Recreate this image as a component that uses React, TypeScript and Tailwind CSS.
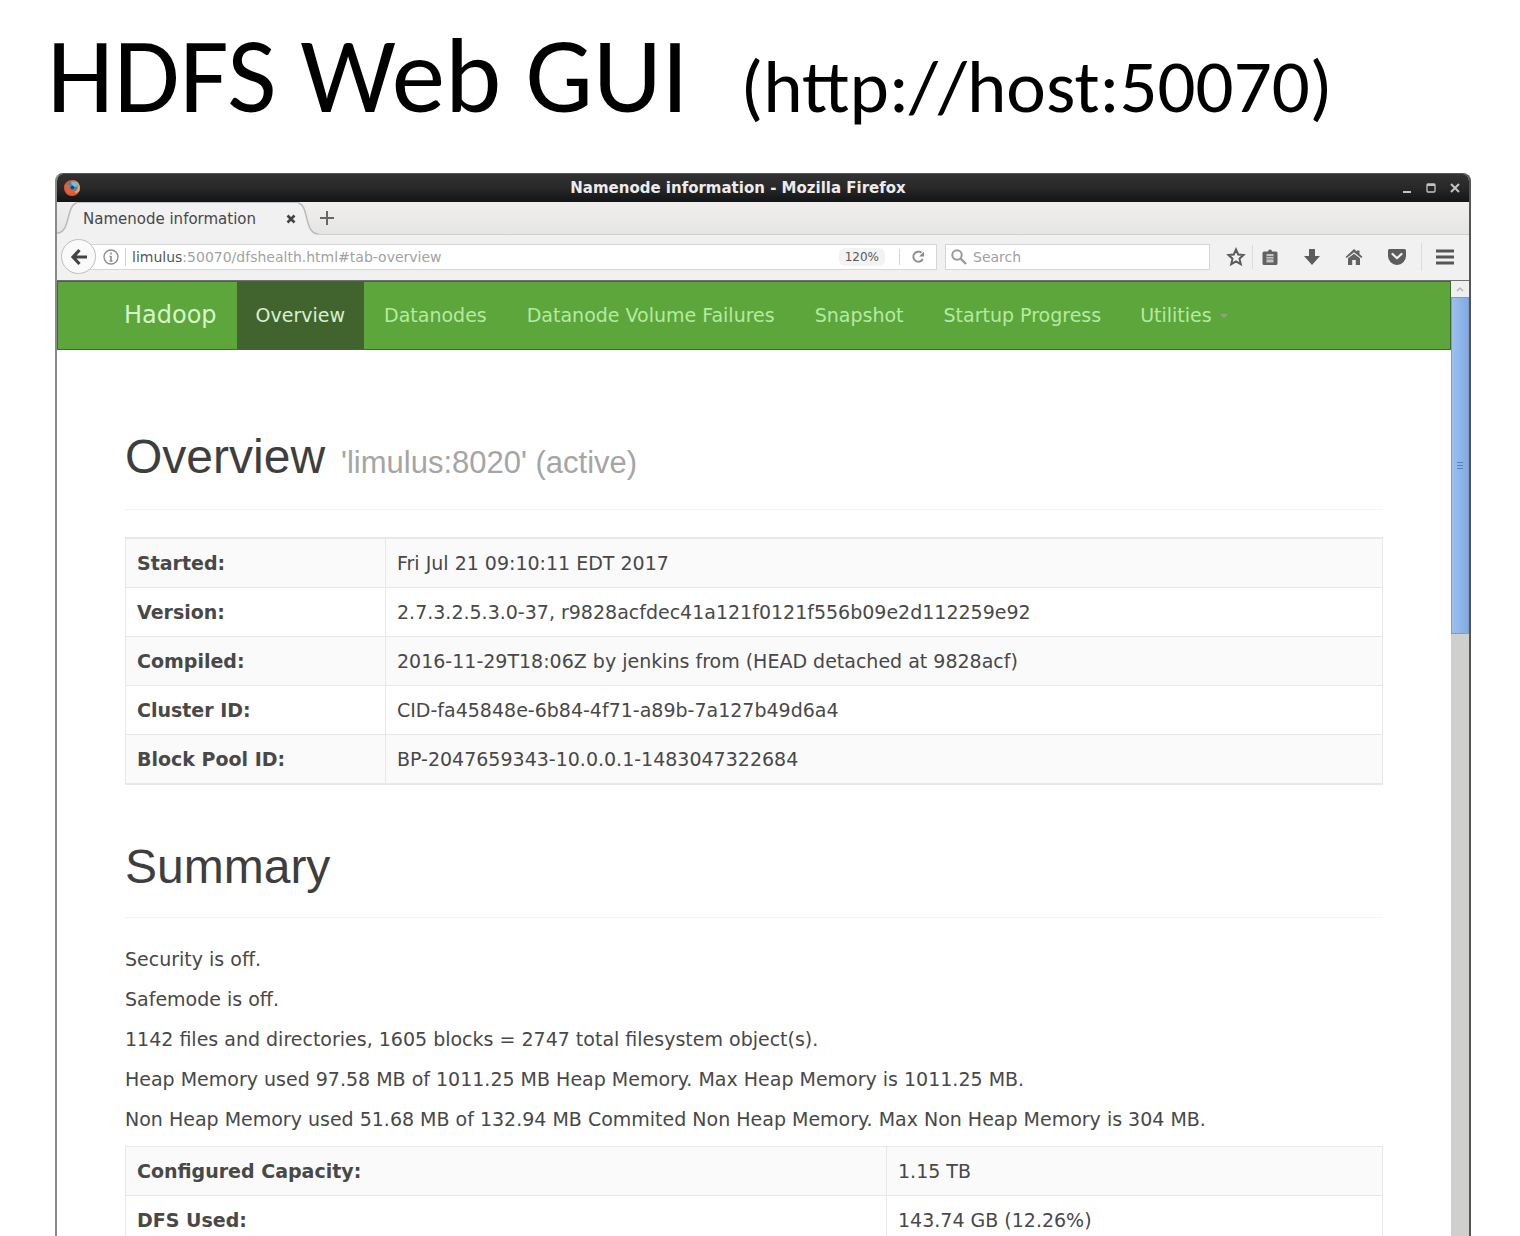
import React from "react";

const navItems = ["Datanodes", "Datanode Volume Failures", "Snapshot", "Startup Progress"];

const overviewRows = [
  ["Started:", "Fri Jul 21 09:10:11 EDT 2017"],
  ["Version:", "2.7.3.2.5.3.0-37, r9828acfdec41a121f0121f556b09e2d112259e92"],
  ["Compiled:", "2016-11-29T18:06Z by jenkins from (HEAD detached at 9828acf)"],
  ["Cluster ID:", "CID-fa45848e-6b84-4f71-a89b-7a127b49d6a4"],
  ["Block Pool ID:", "BP-2047659343-10.0.0.1-1483047322684"],
];

const summaryLines = [
  "Security is off.",
  "Safemode is off.",
  "1142 files and directories, 1605 blocks = 2747 total filesystem object(s).",
  "Heap Memory used 97.58 MB of 1011.25 MB Heap Memory. Max Heap Memory is 1011.25 MB.",
  "Non Heap Memory used 51.68 MB of 132.94 MB Commited Non Heap Memory. Max Non Heap Memory is 304 MB.",
];

const summaryRows = [
  ["Configured Capacity:", "1.15 TB"],
  ["DFS Used:", "143.74 GB (12.26%)"],
];

function FirefoxLogo() {
  return (
    <svg viewBox="0 0 18 18" className="size-[18px]" aria-hidden="true">
      <circle cx="9" cy="9" r="8" fill="#dc5a34" />
      <path d="M9 1a8 8 0 0 1 7.4 11C14 15 11 14 11 12l3-5-2-5z" fill="#e0a468" />
      <circle cx="9.5" cy="7.8" r="5.2" fill="#3f86b4" />
      <path d="M8 2.8c3-1 6.500 1 6.700 4.500L11 8 8.500 5z" fill="#6fc0dc" />
      <path d="M1.300 6C3 5 6 5.500 7.500 7c-1 .6-1.500 1.500-.8 2.700.8 1.300 3 1.600 5.300.8-1 3-5 4.500-8 2.500z" fill="#e8603a" />
      <circle cx="9.500" cy="8.500" r="1.800" fill="#2c3f52" />
    </svg>
  );
}

function TitleBar() {
  return (
    <div className="grid h-7 grid-cols-[100px_1fr_100px] items-center bg-gradient-to-b from-[#323232] via-[#282828] to-[#121416] pl-1.5 pr-2">
      <FirefoxLogo />
      <div className="pr-12 text-center text-[15px] font-bold leading-5 text-[#ececec]">Namenode information - Mozilla Firefox</div>
      <div className="flex items-center justify-end gap-3 text-[#c4c4c4]">
        <button aria-label="Minimize">
          <svg viewBox="0 0 12 12" className="size-3"><path d="M2 10h8" stroke="currentColor" strokeWidth="2" /></svg>
        </button>
        <button aria-label="Maximize">
          <svg viewBox="0 0 12 12" className="size-3" fill="none" stroke="currentColor"><rect x="2" y="2" width="8" height="8" rx="1" strokeWidth="1.300" /><path d="M2 3h8" strokeWidth="2" /></svg>
        </button>
        <button aria-label="Close window">
          <svg viewBox="0 0 12 12" className="size-3"><path d="M2 2l8 8M10 2l-8 8" stroke="currentColor" strokeWidth="2" /></svg>
        </button>
      </div>
    </div>
  );
}

function TabStrip() {
  return (
    <div className="flex h-[33px] bg-gradient-to-b from-[#f0efed] to-[#e5e5e3] text-[#484848]">
      <svg viewBox="0 0 20 33" className="h-[33px] w-5 shrink-0" aria-hidden="true">
        <path d="M0 32C14 32 9 2 20 1V33H0z" fill="#f1f1f1" />
        <path d="M0 31C14 31 9 2 20 1" fill="none" stroke="#b9b9b9" strokeWidth="1.500" />
      </svg>
      <div className="flex items-center gap-[30px] border-t border-[#c4c4c4] bg-[#f1f1f1] pl-1.5 pr-0.5">
        <span className="text-[15px] leading-5">Namenode information</span>
        <button aria-label="Close tab">
          <svg viewBox="0 0 10 10" className="size-2.5"><path d="M1.500 1.500l7 7M8.500 1.500l-7 7" stroke="#444" strokeWidth="2.600" /></svg>
        </button>
      </div>
      <svg viewBox="0 0 20 33" className="h-[33px] w-5 shrink-0" aria-hidden="true">
        <path d="M0 1C11 2 6 32 20 32V33H0z" fill="#f1f1f1" />
        <path d="M0 1C11 2 6 32 20 32" fill="none" stroke="#b9b9b9" strokeWidth="1.500" />
      </svg>
      <div className="flex flex-1 items-center border-b border-[#cfcfcd] pl-0.5">
        <button aria-label="New tab">
          <svg viewBox="0 0 14 14" className="size-3.5"><path d="M7 0v14M0 7h14" stroke="#666" strokeWidth="2" /></svg>
        </button>
      </div>
    </div>
  );
}

function Toolbar() {
  return (
    <div className="flex h-[46px] items-center border-b border-[#707070] bg-[#f1f1f1] pb-0.5 pl-1 pr-[15px] text-[14px] text-[#595959]">
      <button aria-label="Back" className="z-10 flex size-[35px] shrink-0 items-center justify-center rounded-full border border-[#bdbdbd] bg-[#fafafa]">
        <svg viewBox="0 0 18 18" className="size-[18px]" fill="none" stroke="#444" strokeWidth="3.200"><path d="M9.500 2L3 9l6.500 7M3.500 9H17" /></svg>
      </button>
      <div className="-ml-2 mr-2 flex h-[26px] flex-1 items-center border border-[#d6d6d6] bg-white pl-3.5">
        <svg viewBox="0 0 16 16" className="size-4 shrink-0" fill="none" stroke="#8c8c8c"><circle cx="8" cy="8" r="7" strokeWidth="1.300" /><path d="M8 7v5M6.500 7.500H8M6.500 12h3M8 3.500v2" strokeWidth="1.600" /></svg>
        <label htmlFor="address" className="ml-1.5 border-l border-[#d0d0d0] pl-1.5 leading-[18px] text-[#555]">limulus</label>
        <input id="address" className="h-[18px] min-w-0 flex-1 bg-transparent leading-[18px] text-[#a2a2a2] outline-none" defaultValue=":50070/dfshealth.html#tab-overview" />
        <button className="rounded-md bg-[#f3f3f3] px-1.5 text-[12px] leading-[18px]">120%</button>
        <button aria-label="Reload" className="ml-3.5 border-l border-[#d6d6d6] px-2.5">
          <svg viewBox="0 0 16 16" className="size-4" fill="none" stroke="#8a8a8a" strokeWidth="1.800"><path d="M11.500 3.800A5 5 0 1 0 12.800 10" /><path d="M9 7.500H14V2.500z" fill="#8a8a8a" stroke="none" /></svg>
        </button>
      </div>
      <div className="mr-4 flex h-[26px] w-[265px] items-center gap-1.5 border border-[#d6d6d6] bg-white pl-[5px]">
        <svg viewBox="0 0 16 16" className="size-4 shrink-0" fill="none" stroke="#999"><circle cx="6" cy="6" r="4.700" strokeWidth="2" /><path d="M9.500 9.500L15 15" strokeWidth="2.400" /></svg>
        <input aria-label="Search" placeholder="Search" className="h-[18px] min-w-0 flex-1 bg-transparent leading-[18px] outline-none placeholder:text-[#a0a0a0]" />
      </div>
      <div className="flex items-center">
        <button aria-label="Bookmark this page">
          <svg viewBox="0 0 20 20" className="size-5" fill="none" stroke="#5c5c5c" strokeWidth="2"><path d="M10 2.500l2.200 5 5.300.5-4 3.700 1.300 5.500L10 14.300l-4.800 2.900 1.300-5.500-4-3.700 5.300-.5z" /></svg>
        </button>
        <span className="ml-1.5 h-6 border-l border-[#dcdcdc]" />
        <button aria-label="Bookmarks" className="ml-2">
          <svg viewBox="0 0 18 18" className="size-[18px]"><path d="M3 3.500h4A2 2 0 0 1 11 3.500h4a1.500 1.500 0 0 1 1.500 1.500v10.500a1.500 1.500 0 0 1-1.500 1.500H3a1.500 1.500 0 0 1-1.500-1.500V5A1.500 1.500 0 0 1 3 3.500z" fill="#626262" /><path d="M5.500 6h7v8.500h-7z" fill="#c4c4c4" /><path d="M5.500 8.500h7M5.500 11h7" stroke="#727272" strokeWidth="1.200" /></svg>
        </button>
        <button aria-label="Downloads" className="ml-6">
          <svg viewBox="0 0 18 18" className="size-[18px]" fill="#5c5c5c"><path d="M6 1h6v7h5l-8 9-8-9h5z" /></svg>
        </button>
        <button aria-label="Home" className="ml-6">
          <svg viewBox="0 0 18 18" className="size-[18px]" fill="#626262"><path d="M9 1l3 2.600V2.500h2.500v3.400L17.500 9l-1.200 1L9 4.300 1.700 10 .5 9z" /><path d="M3 10.200L9 5.800l6 4.400V17h-4.200v-5H7.200v5H3z" /></svg>
        </button>
        <button aria-label="Pocket" className="ml-6">
          <svg viewBox="0 0 20 18" className="h-[18px] w-5"><path d="M2.500 1h15A1.700 1.700 0 0 1 19 2.700V8a9 9 0 0 1-18 0V2.700A1.700 1.700 0 0 1 2.500 1z" fill="#5c5c5c" /><path d="M5.500 6l4.500 4.300L14.500 6" fill="none" stroke="#f1f1f1" strokeWidth="2.200" strokeLinecap="round" strokeLinejoin="round" /></svg>
        </button>
        <span className="ml-3.5 h-7 border-l border-[#dcdcdc]" />
        <button aria-label="Open menu" className="ml-3.5">
          <svg viewBox="0 0 18 18" className="size-[18px]" stroke="#565656" strokeWidth="3"><path d="M0 3h18M0 9h18M0 15h18" /></svg>
        </button>
      </div>
    </div>
  );
}

function InfoTable({ rows, labelWidth }: { rows: string[][]; labelWidth: string }) {
  return (
    <table className="w-full table-fixed border-collapse border border-[#e8e8e8]">
      <tbody>
        {rows.map(([label, value]) => (
          <tr key={label} className="odd:bg-[#fafafa]">
            <th scope="row" className={`${labelWidth} border border-[#e8e8e8] px-[11px] py-[11px] text-left font-bold leading-[26px]`}>{label}</th>
            <td className="border border-[#e8e8e8] px-[11px] py-[11px] leading-[26px]">{value}</td>
          </tr>
        ))}
      </tbody>
    </table>
  );
}

export default function App() {
  return (
    <div className="flex h-screen flex-col overflow-hidden bg-white font-['DejaVu_Sans',sans-serif]">
      <header className="flex h-[173px] shrink-0 items-baseline gap-[52px] pl-[47px] pt-4 font-[Carlito,Lato,sans-serif] text-black">
        <h1 className="text-[107px] leading-[120px]">HDFS Web GUI</h1>
        <p className="text-[75px] leading-[80px]">(http://host:50070)</p>
      </header>
      <section className="ml-[55px] mr-[49px] flex min-h-0 flex-1 flex-col overflow-hidden rounded-t-lg border-x-2 border-t border-l-[#8a8a8a] border-r-[#555] border-t-[#555]">
        <TitleBar />
        <TabStrip />
        <Toolbar />
        <div className="flex min-h-0 flex-1">
          <main className="min-w-0 flex-1 overflow-hidden text-[19px] leading-[27px] text-[#484848]">
            <nav className="flex h-[69px] items-stretch border border-[#3f6b31] bg-[#5da63c] pl-[66px] text-[#b5eaa0]">
              <a href="#home" className="flex items-center pr-5 text-[24px] text-[#d5f6c8]">Hadoop</a>
              <a href="#overview" className="flex items-center bg-[#41642f] px-[19px] text-[#d8f0cf]">Overview</a>
              {navItems.map((item) => (
                <a key={item} href="#tab" className="flex items-center px-5">{item}</a>
              ))}
              <a href="#utilities" className="flex items-center gap-2 px-[19px]">
                Utilities
                <svg viewBox="0 0 8 4" className="h-1 w-2" aria-hidden="true"><path d="M0 0h8L4 4z" fill="#8aa874" /></svg>
              </a>
            </nav>
            <div className="px-[68px]">
              <h2 className="mt-20 flex h-20 items-baseline gap-4 border-b border-[#f3f3f3] font-['Liberation_Sans',sans-serif] text-[48px] leading-[54px] text-[#3e3e3e]">
                Overview <small className="text-[31px] text-[#a5a5a5]">'limulus:8020' (active)</small>
              </h2>
              <div className="mt-[27px] border-y border-[#e8e8e8]">
                <InfoTable rows={overviewRows} labelWidth="w-[260px]" />
              </div>
              <h2 className="mt-[55px] h-[78px] border-b border-[#f3f3f3] font-['Liberation_Sans',sans-serif] text-[48px] leading-[54px] text-[#3e3e3e]">Summary</h2>
              <div className="mb-[13px] mt-7 space-y-[13px]">
                {summaryLines.map((line) => (
                  <p key={line}>{line}</p>
                ))}
              </div>
              <InfoTable rows={summaryRows} labelWidth="w-[761px]" />
            </div>
          </main>
          <div className="flex w-[18px] shrink-0 flex-col bg-[#cfcfcd]" role="scrollbar" aria-controls="root" aria-valuenow={0} aria-label="Page scroll">
            <div className="flex h-4 items-center justify-center bg-[#efefef]">
              <svg viewBox="0 0 8 6" className="h-1.5 w-2" aria-hidden="true"><path d="M1 5l3-3 3 3" fill="none" stroke="#b5b5b5" strokeWidth="1.500" /></svg>
            </div>
            <div className="flex h-[337px] flex-col items-center justify-center gap-0.5 border border-[#7a9dcc] bg-gradient-to-r from-[#9dc0ef] to-[#82abe3]">
              <span className="h-px w-1.5 bg-[#5580bd]" />
              <span className="h-px w-1.5 bg-[#5580bd]" />
              <span className="h-px w-1.5 bg-[#5580bd]" />
            </div>
          </div>
        </div>
      </section>
    </div>
  );
}
